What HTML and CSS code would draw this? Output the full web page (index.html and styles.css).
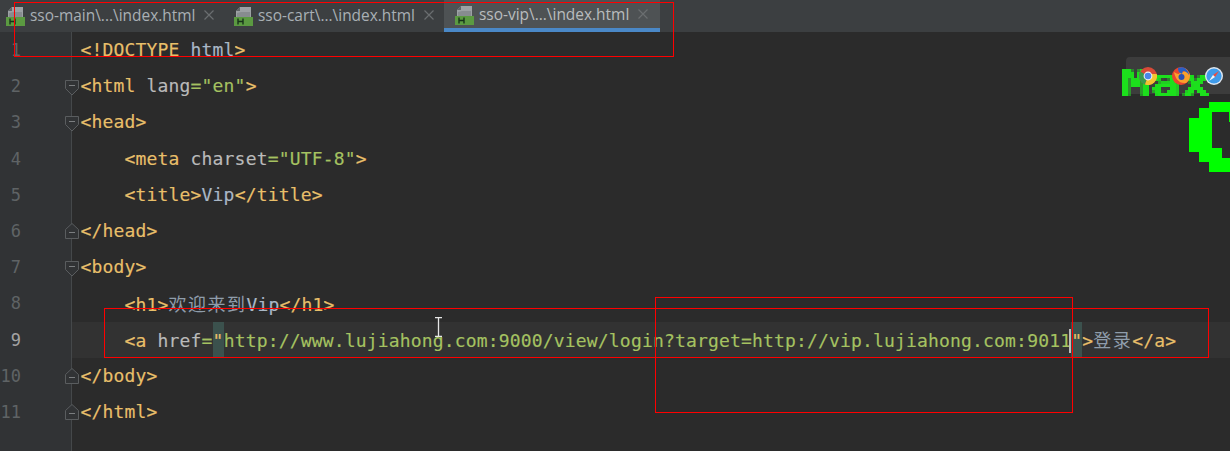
FILE: index.html
```html
<!DOCTYPE html>
<html lang="zh">
<head>
<meta charset="utf-8">
<title>Vip</title>
<link rel="stylesheet" href="styles.css">
</head>
<body>
<svg class="defs" width="0" height="0">
  <defs>
    <symbol id="file-h" viewBox="0 0 19 19">
      <path d="M6 0H17V11H2V4z" fill="#9ca1a4"/>
      <path d="M6 0V4H2z" fill="#5f6467"/>
      <path d="M7 5H16V10H3V6z" fill="#878c8f"/>
      <rect x="0" y="10" width="19" height="9" fill="#5b9a41"/>
      <path d="M4 11.500v6M9 11.500v6M4 14.500h5" stroke="#17331a" stroke-width="1.400" fill="none"/>
    </symbol>
    <symbol id="close-x" viewBox="0 0 10 10">
      <path d="M.5.5l9 9M9.5.5l-9 9" stroke="#6a6e70" stroke-width="1.200" fill="none"/>
    </symbol>
    <symbol id="fold-open" viewBox="0 0 14 16">
      <path d="M.5.5h13v8l-6.500 6.500-6.500-6.500z" fill="#313335" stroke="#5a5d5f"/>
      <path d="M4 5.500h6" stroke="#7b7e80"/>
    </symbol>
    <symbol id="fold-close" viewBox="0 0 14 16">
      <path d="M.5 15.500h13v-9L7 .5.5 6.500z" fill="#313335" stroke="#5a5d5f"/>
      <path d="M4 9.500h6" stroke="#7b7e80"/>
    </symbol>
    <filter id="pixelate" x="0" y="0" width="100%" height="100%">
      <feFlood x="1" y="1" width="1" height="1" flood-color="#000"/>
      <feComposite width="3" height="3"/>
      <feTile result="grid"/>
      <feComposite in="SourceGraphic" in2="grid" operator="in"/>
      <feMorphology operator="dilate" radius="1"/>
    </filter>
  </defs>
</svg>

<div class="ide">
  <div class="tabs">
    <div class="tab">
      <svg class="file-icon"><use href="#file-h"/></svg>
      <span class="tab-label">sso-main\...\index.html</span>
      <svg class="close-icon"><use href="#close-x"/></svg>
    </div>
    <div class="tab">
      <svg class="file-icon"><use href="#file-h"/></svg>
      <span class="tab-label">sso-cart\...\index.html</span>
      <svg class="close-icon"><use href="#close-x"/></svg>
    </div>
    <div class="tab active">
      <svg class="file-icon"><use href="#file-h"/></svg>
      <span class="tab-label">sso-vip\...\index.html</span>
      <svg class="close-icon"><use href="#close-x"/></svg>
    </div>
  </div>

  <div class="editor">
    <div class="line"><span class="num">1</span><code class="code"><i class="t">&lt;!DOCTYPE</i> <i class="x">html</i><i class="t">&gt;</i></code></div>
    <div class="line"><span class="num">2</span><svg class="fold"><use href="#fold-open"/></svg><code class="code"><i class="t">&lt;html</i> <i class="a">lang</i><i class="s">="en"</i><i class="t">&gt;</i></code></div>
    <div class="line"><span class="num">3</span><svg class="fold"><use href="#fold-open"/></svg><code class="code"><i class="t">&lt;head&gt;</i></code></div>
    <div class="line"><span class="num">4</span><code class="code">    <i class="t">&lt;meta</i> <i class="a">charset</i><i class="s">="UTF-8"</i><i class="t">&gt;</i></code></div>
    <div class="line"><span class="num">5</span><code class="code">    <i class="t">&lt;title&gt;</i><i class="x">Vip</i><i class="t">&lt;/title&gt;</i></code></div>
    <div class="line"><span class="num">6</span><svg class="fold closing"><use href="#fold-close"/></svg><code class="code"><i class="t">&lt;/head&gt;</i></code></div>
    <div class="line"><span class="num">7</span><svg class="fold"><use href="#fold-open"/></svg><code class="code"><i class="t">&lt;body&gt;</i></code></div>
    <div class="line"><span class="num">8</span><code class="code">    <i class="t">&lt;h1&gt;</i><i class="cjk">欢迎来到</i><i class="x">Vip</i><i class="t">&lt;/h1&gt;</i></code></div>
    <div class="line current"><span class="num">9</span><code class="code">    <i class="t">&lt;a</i> <i class="a">href</i><i class="s">=</i><i class="t match">"</i><i class="s">http://www.lujiahong.com:9000/view/login?target=http://vip.lujiahong.com:9011</i><i class="t match caret">"</i><i class="t">&gt;</i><i class="cjk">登录</i><i class="t">&lt;/a&gt;</i></code></div>
    <div class="line"><span class="num">10</span><svg class="fold closing"><use href="#fold-close"/></svg><code class="code"><i class="t">&lt;/body&gt;</i></code></div>
    <div class="line"><span class="num">11</span><svg class="fold closing"><use href="#fold-close"/></svg><code class="code"><i class="t">&lt;/html&gt;</i></code></div>
  </div>

  <div class="browser-panel"></div>
  <span class="max">Max</span>
  <div class="browsers">
    <svg class="browser" viewBox="0 0 18 18">
      <circle cx="9" cy="9" r="9" fill="#d84a38"/>
      <path d="M9 9L1.200 4.500A9 9 0 0 0 6 17.500z" fill="#3a9a4e"/>
      <path d="M9 9l-3 8.500A9 9 0 0 0 17.800 7H9z" fill="#f4c430"/>
      <circle cx="9" cy="9" r="4.400" fill="#f1f1f1"/>
      <circle cx="9" cy="9" r="3.300" fill="#4a86e8"/>
    </svg>
    <svg class="browser" viewBox="0 0 18 18">
      <circle cx="9" cy="9" r="9" fill="#e8452f"/>
      <path d="M2 5c1 6 5 12 12 11 3-2 4-5 4-8-1-3-3-6-6-7 1 2 1 3 0 4-2-1-4 0-5 2-2 0-3-1-5-2z" fill="#fba02b"/>
      <path d="M6 1c3-1 6-1 8 1 2 2 3 4 3 6-2-3-4-4-6-4l-1 3C8 6 6 5 6 1z" fill="#2b5fc4"/>
      <circle cx="9.500" cy="10" r="3" fill="#2b4fb4"/>
    </svg>
    <svg class="browser" viewBox="0 0 18 18">
      <circle cx="9" cy="9" r="9" fill="#dfe6ee"/>
      <circle cx="9" cy="9" r="7.600" fill="#3f9bea"/>
      <path d="M14 4L8 8l2 2z" fill="#ee4b3e"/>
      <path d="M4 14l6-4-2-2z" fill="#f4f6f8"/>
    </svg>
  </div>
  <svg class="big-glyph" viewBox="0 0 41 70">
    <path fill="#00ff00" d="M20 0H41V20H40V10H23V46H33V56H41V70H20V60H10V50H0V16H10V6H20Z"/>
  </svg>

  <div class="mark mark-tabs"></div>
  <div class="mark mark-line"></div>
  <div class="mark mark-end"></div>

  <svg class="ibeam" viewBox="0 0 7 20">
    <path d="M0 .5h7M0 19.500h7M3.500 0v20" stroke="#e6e6e6" stroke-width="1.300" fill="none"/>
  </svg>
</div>
</body>
</html>
```
FILE: styles.css
```css
html, body {
  margin: 0;
  padding: 0;
  background: #2b2b2b;
}

.defs {
  position: absolute;
}

.ide {
  position: relative;
  width: 1230px;
  height: 451px;
  overflow: hidden;
  background: #2b2b2b;
}

.tabs {
  display: flex;
  height: 32px;
  background: #3c3f41;
}

.tab {
  display: flex;
  align-items: center;
  height: 30px;
  padding-left: 6px;
  color: #a9b0b5;
  font: 15.450px "Open Sans", sans-serif;
}

.tab:nth-child(1) {
  width: 217px;
}

.tab:nth-child(2) {
  width: 210px;
  padding-left: 11px;
}

.tab.active {
  width: 205px;
  padding-left: 11px;
  height: 28px;
  padding-bottom: 4px;
  background: #4e5254;
  box-shadow: inset 0 -4px 0 #4a88c7;
  color: #b9bcbe;
}

.file-icon {
  width: 19px;
  height: 19px;
  margin-right: 5px;
  margin-top: 3px;
  flex: none;
}

.tab-label {
  white-space: nowrap;
}

.close-icon {
  width: 10px;
  height: 10px;
  margin-left: 9px;
  flex: none;
}

.editor {
  background: linear-gradient(to right, #313335 71px, #45484a 71px, #45484a 72px, #2b2b2b 72px);
  height: 419px;
}

.line {
  position: relative;
  display: flex;
  align-items: center;
  height: 36.200px;
}

.line.current {
  background: linear-gradient(to right, transparent 72px, #323232 72px);
}

.num {
  flex: none;
  width: 21px;
  margin-right: 59.500px;
  text-align: right;
  color: #5f6365;
  font: 17px "DejaVu Sans Mono", monospace;
}

.current .num {
  color: #a4a3a3;
}

.fold {
  position: absolute;
  left: 65px;
  top: 12px;
  width: 14px;
  height: 16px;
}

.fold.closing {
  top: 10px;
}

.code {
  padding-bottom: 1px;
  font: 18px "DejaVu Sans Mono", monospace;
  letter-spacing: 0.170px;
  white-space: pre;
  -webkit-text-stroke: 0.150px currentColor;
}

.current .code {
  padding-bottom: 2px;
}

.code i {
  font-style: normal;
}

.t {
  color: #e8bf6a;
}

.a {
  color: #bababa;
}

.s {
  color: #a5c261;
}

.x {
  color: #a9b7c6;
}

.cjk {
  color: #8f9dab;
  font: 18px "Noto Sans CJK SC", sans-serif;
  letter-spacing: 1.500px;
  -webkit-text-stroke: 0;
}

.match {
  position: relative;
  background: #3b514d;
  padding: 8px 0 7px;
}

.caret::before {
  content: "";
  position: absolute;
  left: -2px;
  top: 7px;
  width: 2px;
  height: 24px;
  background: #bbbbbb;
}

.browser-panel {
  position: absolute;
  left: 1126px;
  top: 57px;
  width: 104px;
  height: 37px;
  background: #3c3c3c;
  border-radius: 4px 0 0 4px;
}

.browsers {
  position: absolute;
  left: 1139px;
  top: 67px;
  display: flex;
  gap: 15px;
}

.browser {
  width: 18px;
  height: 18px;
  flex: none;
}

.max {
  position: absolute;
  left: 1121px;
  top: 63px;
  color: #1fe01f;
  font: bold 37px/42px "DejaVu Sans Mono", monospace;
  letter-spacing: 1px;
  -webkit-text-stroke: 0.800px #1fe01f;
  transform: scaleX(1.300);
  transform-origin: left top;
  filter: url(#pixelate);
}

.big-glyph {
  position: absolute;
  left: 1189px;
  top: 102px;
  width: 41px;
  height: 70px;
}

.mark {
  position: absolute;
  box-sizing: border-box;
  border: 1px solid #ff0000;
}

.mark-tabs {
  left: 14px;
  top: 2px;
  width: 660px;
  height: 55px;
}

.mark-line {
  left: 104px;
  top: 308px;
  width: 1105px;
  height: 50px;
}

.mark-end {
  left: 655px;
  top: 297px;
  width: 418px;
  height: 116px;
}

.ibeam {
  position: absolute;
  left: 435px;
  top: 317px;
  width: 7px;
  height: 20px;
}
```
